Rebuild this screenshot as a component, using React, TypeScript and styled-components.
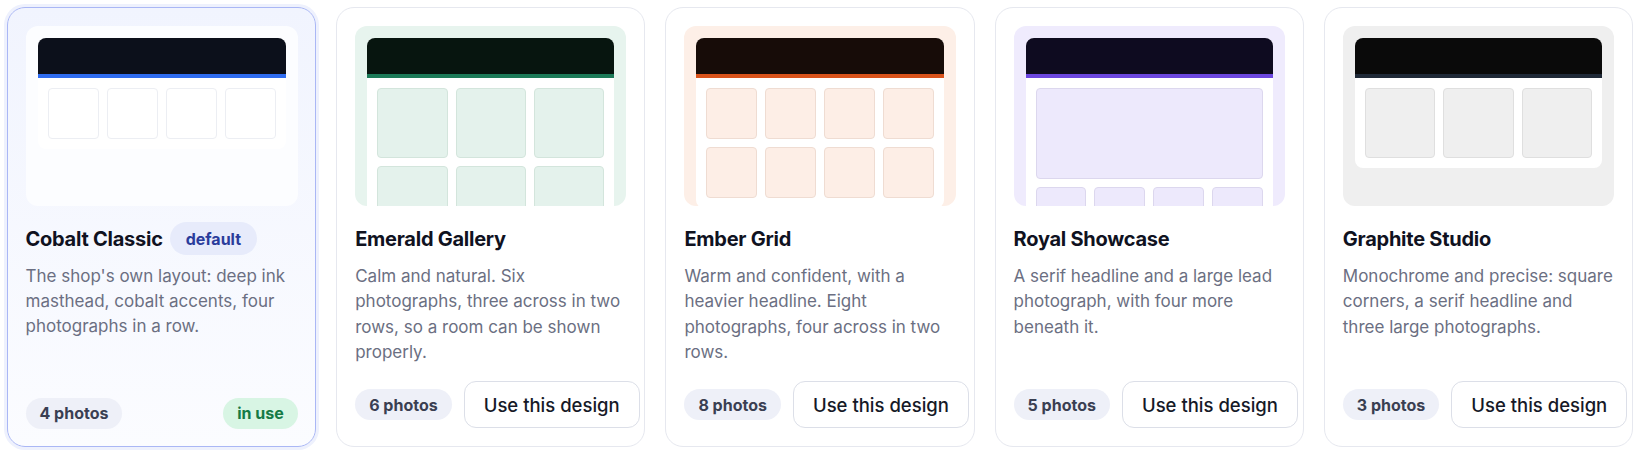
import React from "react";
import styled, { createGlobalStyle, css } from "styled-components";

const GlobalStyle = createGlobalStyle`
  html, body { margin: 0; padding: 0; background: #ffffff; }
  body { font-family: Inter, "Noto Sans", Arial, sans-serif; -webkit-font-smoothing: antialiased; }
  * { box-sizing: border-box; }
`;

type Theme = {
  previewBg: string;
  ink: string;
  accent: string;
  tileBg: string;
  tileBorder: string;
};

type Layout = "row4" | "grid3x2" | "grid4x2" | "lead4" | "row3";

type Design = {
  name: string;
  desc: string;
  photos: number;
  layout: Layout;
  theme: Theme;
  isDefault?: boolean;
  inUse?: boolean;
};

const designs: Design[] = [
  {
    name: "Cobalt Classic",
    desc: "The shop's own layout: deep ink masthead, cobalt accents, four photographs in a row.",
    photos: 4,
    layout: "row4",
    isDefault: true,
    inUse: true,
    theme: { previewBg: "#fcfdff", ink: "#0c101b", accent: "#2f6cf0", tileBg: "#ffffff", tileBorder: "#eceef3" },
  },
  {
    name: "Emerald Gallery",
    desc: "Calm and natural. Six photographs, three across in two rows, so a room can be shown properly.",
    photos: 6,
    layout: "grid3x2",
    theme: { previewBg: "#e7f4ee", ink: "#07150f", accent: "#1c7a58", tileBg: "#e4f2ec", tileBorder: "#d3e5dc" },
  },
  {
    name: "Ember Grid",
    desc: "Warm and confident, with a heavier headline. Eight photographs, four across in two rows.",
    photos: 8,
    layout: "grid4x2",
    theme: { previewBg: "#fdefe7", ink: "#170c08", accent: "#d9531b", tileBg: "#fdeee6", tileBorder: "#efdcd2" },
  },
  {
    name: "Royal Showcase",
    desc: "A serif headline and a large lead photograph, with four more beneath it.",
    photos: 5,
    layout: "lead4",
    theme: { previewBg: "#efebfd", ink: "#0e0b20", accent: "#6c47df", tileBg: "#ede9fc", tileBorder: "#dcd7ee" },
  },
  {
    name: "Graphite Studio",
    desc: "Monochrome and precise: square corners, a serif headline and three large photographs.",
    photos: 3,
    layout: "row3",
    theme: { previewBg: "#efefef", ink: "#0a0a0a", accent: "#1f2937", tileBg: "#efefef", tileBorder: "#dfdfdf" },
  },
];

const Page = styled.main`
  display: grid;
  grid-template-columns: repeat(5, minmax(0, 1fr));
  gap: 20px;
  padding: 7px;
`;

const Card = styled.article<{ $selected?: boolean }>`
  display: flex;
  flex-direction: column;
  min-width: 0;
  height: 440px;
  padding: 18px;
  border: 1px solid #e6e8ef;
  border-radius: 18px;
  background: #ffffff;
  ${(p) =>
    p.$selected &&
    css`
      border: 1.5px solid #aab7f5;
      padding: 17.5px;
      background: linear-gradient(180deg, #f1f4fe 0%, #fbfcff 100%);
      box-shadow: 0 0 0 3px #eef1fd;
    `}
`;

const Preview = styled.div<{ $bg: string }>`
  height: 180px;
  flex-shrink: 0;
  padding: 12px 12px 0;
  border-radius: 12px;
  background: ${(p) => p.$bg};
  overflow: hidden;
`;

const MiniPage = styled.div`
  background: #ffffff;
  border-radius: 8px;
  overflow: hidden;
`;

const Masthead = styled.div<{ $ink: string; $accent: string }>`
  height: 40px;
  background: ${(p) => p.$ink};
  border-bottom: 4px solid ${(p) => p.$accent};
`;

const TileGrid = styled.div<{ $cols: number }>`
  display: grid;
  grid-template-columns: repeat(${(p) => p.$cols}, 1fr);
  gap: 8px;
  padding: 10px;
`;

const Tile = styled.div<{ $bg: string; $border: string; $lead?: boolean; $cols: number }>`
  aspect-ratio: 1 / 1;
  border-radius: 4px;
  background: ${(p) => p.$bg};
  border: 1px solid ${(p) => p.$border};
  ${(p) =>
    p.$lead &&
    css`
      grid-column: 1 / span ${p.$cols};
      aspect-ratio: 5 / 2;
    `}
`;

const TitleRow = styled.div`
  display: flex;
  align-items: center;
  gap: 7px;
  min-height: 34px;
  margin-top: 16px;
`;

const Title = styled.h3`
  margin: 0;
  font-size: 20px;
  font-weight: 700;
  color: #10121f;
  letter-spacing: -0.25px;
`;

const Pill = styled.span<{ $tone: "default" | "count" | "inuse" }>`
  display: inline-flex;
  align-items: center;
  flex-shrink: 0;
  height: 31px;
  padding: 0 14px;
  border-radius: 999px;
  font-size: 16px;
  font-weight: 700;
  white-space: nowrap;
  ${(p) =>
    p.$tone === "default"
      ? css`
          height: 33px;
          padding: 0 16px;
          background: #e7ebfb;
          color: #2a3c9c;
        `
      : p.$tone === "inuse"
      ? css`
          background: #d8f5e4;
          color: #157a46;
        `
      : css`
          background: #eef0f8;
          color: #3a3f52;
        `}
`;

const Desc = styled.p`
  margin: 8px 0 0;
  font-size: 17px;
  line-height: 25.4px;
  color: #6b6f82;
`;

const Footer = styled.div`
  margin-top: auto;
  display: flex;
  align-items: center;
  justify-content: space-between;
  gap: 12px;
`;

const UseButton = styled.button`
  flex-shrink: 0;
  height: 47px;
  padding: 0 19px;
  border: 1px solid #dcdfe8;
  border-radius: 12px;
  background: #ffffff;
  font-family: inherit;
  font-size: 18.5px;
  font-weight: 500;
  color: #161927;
  white-space: nowrap;
  cursor: pointer;
`;

const layoutCols: Record<Layout, number> = {
  row4: 4,
  grid3x2: 3,
  grid4x2: 4,
  lead4: 4,
  row3: 3,
};

function PreviewArt({ design }: { design: Design }) {
  const { theme, layout, photos } = design;
  const cols = layoutCols[layout];
  return (
    <Preview $bg={theme.previewBg}>
      <MiniPage>
        <Masthead $ink={theme.ink} $accent={theme.accent} />
        <TileGrid $cols={cols}>
          {Array.from({ length: photos }).map((_, i) => (
            <Tile
              key={i}
              $cols={cols}
              $bg={theme.tileBg}
              $border={theme.tileBorder}
              $lead={layout === "lead4" && i === 0}
            />
          ))}
        </TileGrid>
      </MiniPage>
    </Preview>
  );
}

export default function App() {
  return (
    <>
      <GlobalStyle />
      <Page>
        {designs.map((d) => (
          <Card key={d.name} $selected={d.inUse}>
            <PreviewArt design={d} />
            <TitleRow>
              <Title>{d.name}</Title>
              {d.isDefault && <Pill $tone="default">default</Pill>}
            </TitleRow>
            <Desc>{d.desc}</Desc>
            <Footer>
              <Pill $tone="count">{d.photos} photos</Pill>
              {d.inUse ? <Pill $tone="inuse">in use</Pill> : <UseButton>Use this design</UseButton>}
            </Footer>
          </Card>
        ))}
      </Page>
    </>
  );
}
